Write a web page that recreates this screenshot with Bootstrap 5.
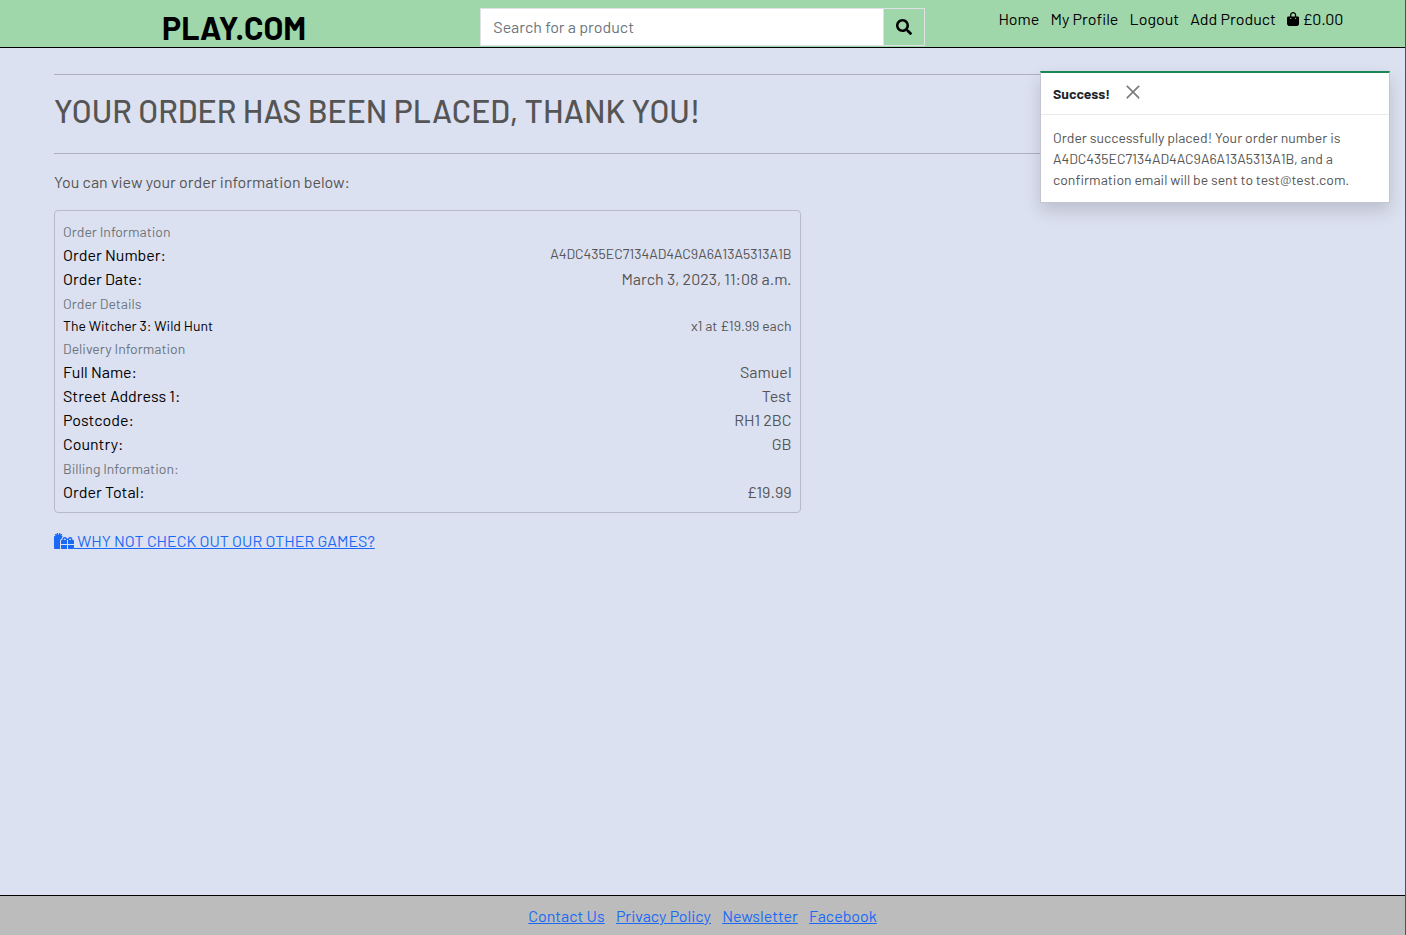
<!DOCTYPE html>
<html lang="en">
<head>
<meta charset="utf-8">
<meta name="viewport" content="width=device-width, initial-scale=1">
<title>PLAY.COM - Order placed</title>
<link href="https://cdn.jsdelivr.net/npm/bootstrap@5.3.0/dist/css/bootstrap.min.css" rel="stylesheet">
<style>
  body { font-family: Barlow, Roboto, sans-serif; background: #dce1f1; color: #555; border-right: 1px solid #4f5154; }
  .site-header { background: #9fd7aa; border-bottom: 1px solid #000; padding-bottom: 1px; }
  .site-header a { color: #000; text-decoration: none; }
  .site-header nav { padding-top: 7px; }
  .brand-title { font-size: 32px; line-height: 38px; font-weight: 700; padding-top: 8px; }
  .search-box .form-control, .search-box .btn { border-radius: 0; border-color: #dee2e6; }
  .search-box .form-control::placeholder { color: #6c757d; }
  .search-box .btn { color: #000; }
  .order-page { max-width: 1321px; padding-top: 10px; }
  .page-title { font-size: 32px; line-height: 38px; font-weight: 500; }
  hr { color: #8d919d; opacity: .6; }
  .order-box { border: 1px solid #b7bac8; border-radius: 4px; }
  .order-box dt { font-weight: 400; color: #000; }
  .order-box h2 { font-size: 16px; line-height: 24px; height: 24px; color: #6c757d; font-weight: 400; margin: 0; }
  .order-box h2 small, .fs-14 { font-size: 14px; }
  .fa-icon { height: 16px; fill: currentColor; vertical-align: -2px; }
  .bag-icon { height: 14px; vertical-align: -1px; }
  .link-blue, .site-footer a { color: #1a6af5; }
  .site-footer { background: #bcbcbc; border-top: 1px solid #000; padding: 8px 0 7px; }
  .message-area { top: 71px; right: 15px; z-index: 10; }
  .order-toast { border-radius: 0; border: 1px solid #c3c6d0; border-top: 2px solid #198754; background: #fff; --bs-toast-max-width: 350px; box-shadow: 0 8px 16px rgba(0,0,0,.15); }
  .order-toast .toast-head { color: #212529; border-bottom: 1px solid #e9ebee; line-height: 41px; padding: 0 12px; gap: 15px; }
  .order-toast .btn-close { padding: 0; width: 16px; height: 16px; margin-bottom: 3px; }
</style>
</head>
<body class="d-flex flex-column min-vh-100 position-relative">
<header class="site-header">
  <div class="container-fluid">
    <div class="row">
      <div class="col-4 text-center"><h1 class="brand-title mb-0"><a href="#">PLAY.COM</a></h1></div>
      <div class="col-4 pt-2">
        <form class="input-group search-box" role="search">
          <input class="form-control" type="search" placeholder="Search for a product" aria-label="Search for a product">
          <button class="btn" type="button" aria-label="Search">
            <svg class="fa-icon" viewBox="0 0 512 512"><path d="M505 442.7L405.3 343c-4.5-4.5-10.6-7-17-7H372c27.6-35.3 44-79.7 44-128C416 93.1 322.9 0 208 0S0 93.1 0 208s93.1 208 208 208c48.3 0 92.7-16.4 128-44v16.3c0 6.4 2.5 12.5 7 17l99.7 99.7c9.4 9.4 24.6 9.4 33.9 0l28.3-28.3c9.4-9.4 9.4-24.6.1-34zM208 336c-70.7 0-128-57.2-128-128 0-70.7 57.2-128 128-128 70.7 0 128 57.2 128 128 0 70.7-57.2 128-128 128z"/></svg>
          </button>
        </form>
      </div>
      <nav class="col-4 text-center" aria-label="Account">
        <ul class="list-inline mb-0 text-nowrap">
          <li class="list-inline-item"><a href="#">Home</a></li>
          <li class="list-inline-item"><a href="#">My Profile</a></li>
          <li class="list-inline-item"><a href="#">Logout</a></li>
          <li class="list-inline-item"><a href="#">Add Product</a></li>
          <li class="list-inline-item"><a href="#"><svg class="fa-icon bag-icon" viewBox="0 0 448 512"><path d="M160 112c0-35.3 28.7-64 64-64s64 28.7 64 64v48H160V112zm-48 48H48c-26.5 0-48 21.5-48 48V416c0 53 43 96 96 96H352c53 0 96-43 96-96V208c0-26.5-21.5-48-48-48H336V112C336 50.1 285.9 0 224 0S112 50.1 112 112v48zm24 48a24 24 0 1 1 0 48 24 24 0 1 1 0-48zm152 24a24 24 0 1 1 48 0 24 24 0 1 1 -48 0z"/></svg> £0.00</a></li>
        </ul>
      </nav>
    </div>
  </div>
</header>

<div class="message-area position-absolute">
  <div class="toast order-toast show" role="alert">
    <div class="toast-head d-flex align-items-center"><strong>Success!</strong>
      <button type="button" class="btn-close" data-bs-dismiss="toast" aria-label="Close"></button>
    </div>
    <div class="toast-body">Order successfully placed! Your order number is A4DC435EC7134AD4AC9A6A13A5313A1B, and a confirmation email will be sent to test@test.com.</div>
  </div>
</div>

<main class="container order-page flex-grow-1">
  <hr class="mt-3">
  <div class="pb-2"><h1 class="page-title mb-0">YOUR ORDER HAS BEEN PLACED, THANK YOU!</h1></div>
  <hr>
  <p>You can view your order information below:</p>
  <div class="row">
    <div class="col-7">
      <section class="order-box p-2 mb-3">
        <h2><small>Order Information</small></h2>
        <dl class="mb-0">
          <div class="d-flex justify-content-between"><dt>Order Number:</dt><dd class="mb-0 fs-14">A4DC435EC7134AD4AC9A6A13A5313A1B</dd></div>
          <div class="d-flex justify-content-between"><dt>Order Date:</dt><dd class="mb-0">March 3, 2023, 11:08 a.m.</dd></div>
        </dl>
        <h2><small>Order Details</small></h2>
        <dl class="mb-0 fs-14">
          <div class="d-flex justify-content-between"><dt>The Witcher 3: Wild Hunt</dt><dd class="mb-0">x1 at £19.99 each</dd></div>
        </dl>
        <h2><small>Delivery Information</small></h2>
        <dl class="mb-0">
          <div class="d-flex justify-content-between"><dt>Full Name:</dt><dd class="mb-0">Samuel</dd></div>
          <div class="d-flex justify-content-between"><dt>Street Address 1:</dt><dd class="mb-0">Test</dd></div>
          <div class="d-flex justify-content-between"><dt>Postcode:</dt><dd class="mb-0">RH1 2BC</dd></div>
          <div class="d-flex justify-content-between"><dt>Country:</dt><dd class="mb-0">GB</dd></div>
        </dl>
        <h2><small>Billing Information:</small></h2>
        <dl class="mb-0">
          <div class="d-flex justify-content-between"><dt>Order Total:</dt><dd class="mb-0">£19.99</dd></div>
        </dl>
      </section>
      <a class="link-blue" href="#"><svg class="fa-icon" viewBox="0 0 640 512"><path d="M240.6 194.1c1.9-30.8 17.3-61.2 44-79.8C279.4 103.5 268.7 96 256 96h-29.4l30.7-22c7.2-5.1 8.9-15.1 3.7-22.3l-9.3-13c-5.1-7.2-15.1-8.9-22.3-3.7l-32 22.9 11.5-30.6c3.1-8.3-1.1-17.5-9.4-20.6l-15-5.6c-8.3-3.1-17.5 1.1-20.6 9.4l-19.9 53-19.9-53.1C121 2.1 111.8-2.1 103.5 1l-15 5.6C80.2 9.7 76 19 79.2 27.2l11.5 30.6L58.6 35c-7.2-5.1-17.2-3.5-22.3 3.7l-9.3 13c-5.1 7.2-3.5 17.2 3.7 22.3l30.7 22H32c-17.7 0-32 14.3-32 32v352c0 17.7 14.3 32 32 32h168.9c-5.5-9.5-8.9-20.3-8.9-32V256c0-29.9 20.8-55 48.6-61.9zM224 480c0 17.7 14.3 32 32 32h160V384H224v96zm224 32h160c17.7 0 32-14.3 32-32v-96H448v128zm160-288h-20.4c2.6-7.6 4.4-15.5 4.4-23.8 0-35.5-27-72.2-72.1-72.2-48.1 0-75.9 47.7-87.9 75.3-12.1-27.6-39.9-75.3-87.9-75.3-45.1 0-72.1 36.7-72.1 72.2 0 8.3 1.7 16.2 4.4 23.8H256c-17.7 0-32 14.3-32 32v96h192V224h15.3l.7-.2.7.2H448v128h192v-96c0-17.7-14.3-32-32-32zm-272 0c-2.7-1.4-5.1-3-7.2-4.8-7.3-6.4-8.8-13.8-8.8-19 0-9.7 6.4-24.2 24.1-24.2 18.7 0 35.6 27.4 44.5 48H336zm199.2-4.8c-2.1 1.8-4.5 3.4-7.2 4.8h-52.6c8.8-20.3 25.8-48 44.5-48 17.7 0 24.1 14.5 24.1 24.2 0 5.2-1.5 12.6-8.8 19z"/></svg> WHY NOT CHECK OUT OUR OTHER GAMES?</a>
    </div>
  </div>
</main>

<footer class="site-footer text-center">
  <ul class="list-inline mb-0">
    <li class="list-inline-item"><a href="#">Contact Us</a></li>
    <li class="list-inline-item"><a href="#">Privacy Policy</a></li>
    <li class="list-inline-item"><a href="#">Newsletter</a></li>
    <li class="list-inline-item"><a href="#">Facebook</a></li>
  </ul>
</footer>
<script src="https://cdn.jsdelivr.net/npm/bootstrap@5.3.0/dist/js/bootstrap.bundle.min.js"></script>
</body>
</html>
